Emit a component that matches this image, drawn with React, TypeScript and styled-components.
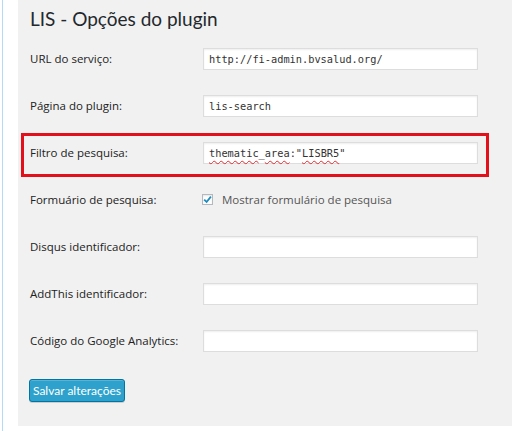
import React from 'react'
import styled, { createGlobalStyle } from 'styled-components'

const GlobalStyle = createGlobalStyle`
  html, body {
    margin: 0;
    padding: 0;
    background: #fff;
  }
  body {
    font-family: "Open Sans", "Liberation Sans", sans-serif;
    color: #222;
  }
`

const Page = styled.div`
  display: flex;
  width: 512px;
  height: 431px;
  overflow: hidden;
`

const Gutter = styled.div`
  width: 18px;
  flex-shrink: 0;
  box-sizing: border-box;
  padding-left: 2px;
`

const GutterLine = styled.div`
  width: 1px;
  height: 100%;
  background: #b3dbf7;
`

const Panel = styled.div`
  flex: 1;
  height: 426px;
  background: #f1f1f1;
  box-sizing: border-box;
  padding-top: 5px;
`

const Title = styled.h2`
  margin: 0 0 2px 12px;
  font-family: Lato, "Open Sans", sans-serif;
  font-size: 19px;
  line-height: 28px;
  font-weight: 400;
  color: #23282d;
`

const Form = styled.div`
  display: flex;
  flex-direction: column;
`

const Row = styled.div<{ $flagged?: boolean }>`
  position: relative;
  display: flex;
  align-items: center;
  height: 47px;
  padding-left: 12px;

  ${p => p.$flagged && `
    &::after {
      content: '';
      position: absolute;
      left: 3px;
      right: 23px;
      top: 4px;
      height: 44px;
      box-sizing: border-box;
      border: 3px solid #e3101c;
      pointer-events: none;
    }
  `}
`

const Label = styled.div`
  width: 173px;
  flex-shrink: 0;
  font-size: 11.5px;
  color: #222;
`

const Field = styled.div`
  width: 275px;
  height: 22px;
  box-sizing: border-box;
  border: 1px solid #ddd;
  background: #fff;
  box-shadow: inset 0 1px 2px rgba(0, 0, 0, 0.07);
  padding: 0 5px;
  display: flex;
  align-items: center;
  font-family: "DejaVu Sans Mono", "Liberation Mono", monospace;
  font-size: 10.3px;
  color: #333;
  white-space: pre;
`

const Misspelled = styled.span`
  text-decoration: underline wavy #e0282d;
  text-decoration-thickness: 1px;
  text-underline-offset: 3px;
`

const CheckWrap = styled.label`
  display: flex;
  align-items: center;
  gap: 9px;
  margin-left: -1px;
  font-size: 11.5px;
  color: #555;
`

const CheckBox = styled.span`
  width: 11px;
  height: 11px;
  box-sizing: border-box;
  border: 1px solid #b4b9be;
  background: #fff;
  box-shadow: inset 0 1px 2px rgba(0, 0, 0, 0.1);
  display: flex;
  align-items: center;
  justify-content: center;
`

const Footer = styled.div`
  padding: 14px 0 0 11px;
`

const SaveButton = styled.button`
  width: 96px;
  height: 23px;
  padding: 0;
  border: 1px solid #0074a2;
  border-radius: 3px;
  background: #2ea2cc;
  box-shadow: inset 0 1px 0 rgba(120, 200, 230, 0.5), 0 1px 0 rgba(0, 0, 0, 0.15);
  color: #fff;
  font-family: Lato, "Open Sans", sans-serif;
  font-size: 12px;
  cursor: pointer;
`

const Check = () => (
  <svg width="9" height="9" viewBox="0 0 9 9">
    <path d="M1.2 4.6 L3.6 7 L7.9 1.6" fill="none" stroke="#1e8cbe" strokeWidth="1.8" />
  </svg>
)

const fields = [
  { label: 'URL do serviço:', value: 'http://fi-admin.bvsalud.org/' },
  { label: 'Página do plugin:', value: 'lis-search' },
]

const emptyFields = ['Disqus identificador:', 'AddThis identificador:', 'Código do Google Analytics:']

export default function App() {
  return (
    <>
      <GlobalStyle />
      <Page>
        <Gutter>
          <GutterLine />
        </Gutter>
        <Panel>
          <Title>LIS - Opções do plugin</Title>
          <Form>
            {fields.map(f => (
              <Row key={f.label}>
                <Label>{f.label}</Label>
                <Field>{f.value}</Field>
              </Row>
            ))}
            <Row $flagged>
              <Label>Filtro de pesquisa:</Label>
              <Field>
                <Misspelled>thematic</Misspelled>_<Misspelled>area</Misspelled>:"<Misspelled>LISBR5</Misspelled>"
              </Field>
            </Row>
            <Row>
              <Label>Formuário de pesquisa:</Label>
              <CheckWrap>
                <CheckBox>
                  <Check />
                </CheckBox>
                Mostrar formulário de pesquisa
              </CheckWrap>
            </Row>
            {emptyFields.map(l => (
              <Row key={l}>
                <Label>{l}</Label>
                <Field />
              </Row>
            ))}
          </Form>
          <Footer>
            <SaveButton>Salvar alterações</SaveButton>
          </Footer>
        </Panel>
      </Page>
    </>
  )
}
